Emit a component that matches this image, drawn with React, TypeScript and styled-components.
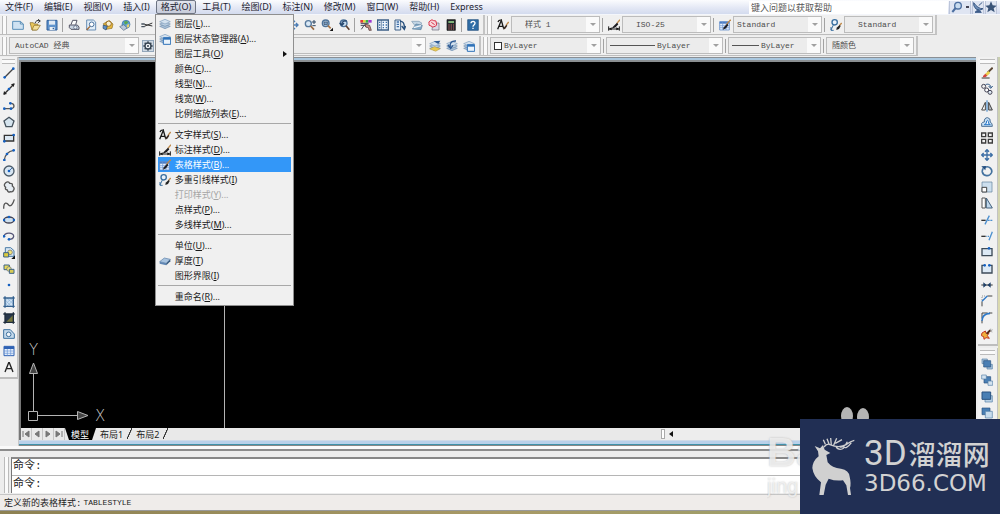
import React from "react";
import styled, { createGlobalStyle } from "styled-components";

const sans = `"Noto Sans", "Noto Sans CJK SC", sans-serif`;
const mono = `"Liberation Mono", "Noto Sans CJK SC", monospace`;

const GlobalStyle = createGlobalStyle`
  * { box-sizing: border-box; }
  body { margin: 0; background: #ededed; font-family: ${sans}; font-size: 9px; color: #222; overflow: hidden; }
  button, input, select { font: inherit; color: inherit; margin: 0; padding: 0; border: 0; background: none; }
`;

/* ---------- icons, drawn on a 36 unit grid ---------- */

const B = "#3f6fa8";
const D = "#2b4560";
const L = "#cfe2f2";

const brush = (
  <>
    <path d="M35 2 L22 17" stroke="#c08a4a" strokeWidth="4" />
    <path d="M25 14 L14 25 L12 32 L21 28 L28 18Z" fill="#1d1d22" stroke="none" />
  </>
);
const layerStack = (
  <>
    <path d="M2 25 L18 19 L34 25 L18 32Z" fill="#a8bfd6" stroke="#6f8fb0" strokeWidth="2" />
    <path d="M2 18 L18 12 L34 18 L18 25Z" fill="#bdd0e2" stroke="#6f8fb0" strokeWidth="2" />
    <path d="M2 11 L18 4 L34 11 L18 18Z" fill="#d4e2ef" stroke="#7f9dbd" strokeWidth="2" />
  </>
);
const dot = (x: number, y: number, r = 4) => (
  <circle key={`${x}-${y}`} cx={x} cy={y} r={r} fill="#1560c0" stroke="none" />
);

const icons: Record<string, React.ReactNode> = {
  new: <path d="M2 7 H25 L34 15 V31 H2Z M25 7 V15 H34" fill={L} stroke="#5a8fb8" strokeWidth="3" />,
  open: (
    <>
      <path d="M3 11 H13 L16 15 H27 L23 33 H9Z" fill="#e8c65a" stroke="#8a6a20" strokeWidth="2" />
      <path d="M9 33 L15 19 H34 L25 33Z" fill="#f4e09a" stroke="#8a6a20" strokeWidth="2" />
      <path d="M18 13 C20 5 26 3 32 5 M27 1 L34 6 L27 11" stroke="#333" strokeWidth="3" />
    </>
  ),
  save: (
    <>
      <path d="M3 4 H33 V33 H3Z" fill="#5f93cc" stroke="#2f5f9a" strokeWidth="3" />
      <path d="M9 5 H27 V17 H9Z" fill="#dfe9f4" stroke="none" />
      <path d="M11 24 H26 V33 H11Z" fill="#e8eef4" stroke="none" />
      <path d="M20 26 H24 V31 H20Z" fill="#2f5f9a" stroke="none" />
    </>
  ),
  print: (
    <>
      <path d="M9 17 L14 4 H27 L23 17" fill="#fff" stroke="#556" strokeWidth="3" />
      <path d="M4 18 H28 L33 24 V31 H9 L4 26Z" fill="#c9d3e0" stroke="#556" strokeWidth="3" />
      <circle cx="22" cy="25" r="5" fill="#e8edf4" stroke="#4a5a78" strokeWidth="2" />
    </>
  ),
  preview: (
    <>
      <path d="M5 3 H25 L32 9 V33 H5Z" fill="#e2eef8" stroke="#6a8fb5" strokeWidth="3" />
      <circle cx="20" cy="16" r="7" fill="#fff" stroke="#47709c" strokeWidth="3" />
      <path d="M15 22 L5 33" stroke="#a06a3a" strokeWidth="4" />
    </>
  ),
  publish: (
    <>
      <path d="M4 14 L22 5 L33 15 L30 28 L12 31Z" fill="#e9b93a" stroke="#8c6b1f" strokeWidth="2" />
      <circle cx="20" cy="14" r="8" fill="#f8f0d0" stroke="#9a6d20" strokeWidth="3" />
      <path d="M4 18 L16 22 L12 33 L3 28Z" fill="#5d8fc7" stroke={D} strokeWidth="2" />
    </>
  ),
  globe: (
    <>
      <circle cx="21" cy="16" r="12" fill="#5aa0d8" stroke="#3b6fa0" strokeWidth="2" />
      <path d="M15 8 Q22 3 28 10 Q24 17 17 16Z" fill="#59a650" stroke="none" />
      <path d="M23 18 L31 14 L30 24 L24 27Z" fill="#e8d26a" stroke="none" />
      <path d="M2 23 L14 17 L25 27 L14 34Z" fill="#b8c8da" stroke="#51677f" strokeWidth="2" />
    </>
  ),
  cut: (
    <>
      <path d="M10 16 L34 21 M10 22 L34 12" stroke="#333" strokeWidth="3" />
      <path d="M1 15 H11 M1 23 H11" stroke="#47525e" strokeWidth="4" />
    </>
  ),
  copy: <path d="M5 4 H22 V25 H5Z M14 11 H31 V32 H14Z" fill={L} stroke={B} strokeWidth="2" />,
  undo: <path d="M8 6 V18 H20 M8 18 C14 6 32 8 30 28" stroke={B} strokeWidth="4" />,
  pan: <path d="M18 3 V33 M3 18 H33 M12 9 L18 3 L24 9 M12 27 L18 33 L24 27 M27 12 L33 18 L27 24" stroke="#4a7cb5" strokeWidth="4" />,
  zoomRt: (
    <>
      <circle cx="13" cy="14" r="9" fill="#d9e8f5" stroke="#55789c" strokeWidth="4" />
      <path d="M20 21 L30 32" stroke="#9a6a40" strokeWidth="5" />
      <path d="M24 9 H36 M30 3 V15 M25 20 H35" stroke={D} strokeWidth="3" />
    </>
  ),
  zoomWin: (
    <>
      <circle cx="14" cy="13" r="10" fill="#b9d3ea" stroke="#4d7299" strokeWidth="4" />
      <path d="M9 9 H19 V17 H9Z" fill="#7ba3cc" stroke="#345" strokeWidth="2" />
      <path d="M21 20 L29 28" stroke="#a87444" strokeWidth="5" />
      <path d="M36 26 V36 H26Z" fill="#111" stroke="none" />
    </>
  ),
  zoomPrev: (
    <>
      <circle cx="17" cy="13" r="10" fill="#c6dbee" stroke="#4d7299" strokeWidth="4" />
      <path d="M24 20 L34 32" stroke="#5d4030" strokeWidth="5" />
      <path d="M26 6 C18 4 10 8 12 17 M5 12 L12 19 L18 12" stroke="#26476e" strokeWidth="4" />
    </>
  ),
  props: (
    <>
      <path d="M1 3 H9 V11 H1Z" fill="#e03a3a" stroke="none" />
      <path d="M9 3 H17 V11 H9Z" fill="#e8d53a" stroke="none" />
      <path d="M17 3 H25 V11 H17Z" fill="#38b04a" stroke="none" />
      <path d="M25 3 H35 V11 H25Z" fill="#a03ad0" stroke="none" />
      <path d="M2 13 H26 M2 19 H18 M4 31 L13 18 L20 24" stroke="#445" strokeWidth="3" />
      <path d="M15 15 L29 19 L34 34 L27 34 L25 26 L17 24Z" fill="#c88f84" stroke="#4a3030" strokeWidth="2" />
    </>
  ),
  designCenter: (
    <>
      <path d="M2 3 H34 V33 H2Z" fill="#eef4fa" stroke="#3d5f86" strokeWidth="4" />
      <path d="M13 3 V33" stroke="#3d5f86" strokeWidth="2" />
      <path d="M6 10 H10 M6 18 H10 M6 26 H10 M17 10 H21 M26 10 H30 M17 18 H21 M26 18 H30 M17 26 H21 M26 26 H30" stroke={B} strokeWidth="4" />
    </>
  ),
  palettes: (
    <>
      <path d="M3 3 H20 V33 H3Z" fill="#e4eef8" stroke="#3d5f86" strokeWidth="3" />
      <path d="M8 9 H15 M8 16 H15 M8 23 H15" stroke={B} strokeWidth="4" />
      <path d="M18 7 C28 6 31 14 31 26 M23 21 L31 31 L35 21" stroke="#28507c" strokeWidth="4" />
    </>
  ),
  sheets: (
    <>
      <path d="M2 7 H24 L33 13 L26 20 H12Z" fill="#c2d5e4" stroke="#7d99b0" strokeWidth="2" />
      <path d="M4 30 L15 15 L34 19 L30 32Z" fill="#7fa6c4" stroke="#5d7f9b" strokeWidth="2" />
      <path d="M8 26 L30 20" stroke="#f2f6fa" strokeWidth="4" />
    </>
  ),
  markup: (
    <>
      <path d="M14 12 H33 V33 H12Z" fill="#d9d9e4" stroke="#667" strokeWidth="2" />
      <path d="M6 6 Q12 -1 17 5 Q26 3 25 12 Q29 20 21 22 Q14 27 9 21 Q0 20 3 13 Q1 8 6 6Z" fill="#f8d8dc" stroke="#d8344a" strokeWidth="3" />
      <path d="M10 10 L20 17" stroke="#d8344a" strokeWidth="3" />
    </>
  ),
  calc: (
    <>
      <path d="M6 2 H31 V34 H6Z" fill="#252a2e" stroke="#111" strokeWidth="2" />
      <path d="M10 6 H27 V12 H10Z" fill="#82b27a" stroke="none" />
      <path d="M10 18 H27 M10 24 H27 M10 30 H27" stroke="#c26060" strokeWidth="3" strokeDasharray="4 3" />
    </>
  ),
  help: (
    <>
      <path d="M2 2 H34 V34 H2Z" fill="#2f6da6" stroke="#1d4a78" strokeWidth="2" />
      <path d="M12 13 C12 5 25 6 24 13 C24 18 18 18 18 23 M18 26 V30" stroke="#fff" strokeWidth="4" />
    </>
  ),
  textStyle: (
    <>
      <path d="M2 31 L13 4 L20 29 M5 22 H19 M3 9 Q6 2 13 4" stroke="#1b1b1b" strokeWidth="4" />
      <path d="M35 9 L27 19" stroke="#c08a4a" strokeWidth="4" />
      <path d="M28 17 L20 26 L19 32 L25 29 L31 20Z" fill="#3a2a22" stroke="none" />
    </>
  ),
  dimStyle: (
    <>
      <path d="M2 30 H34 M2 22 V35 M34 22 V35" stroke="#1b1b1b" strokeWidth="3" />
      <path d="M2 30 L11 25 V34Z M34 30 L25 25 V34Z" fill="#111" stroke="none" />
      <path d="M36 2 L26 14" stroke="#c08a4a" strokeWidth="4" />
      <path d="M27 11 L14 24 L11 29 L23 25 L31 16Z" fill="#1d1d22" stroke="none" />
    </>
  ),
  tableStyle: (
    <>
      <path d="M2 8 H31 V33 H2Z" fill="#e8f0fb" stroke="#4a7cc4" strokeWidth="2" />
      <path d="M2 8 H31 V14 H2Z" fill="#4a7cc4" stroke="none" />
      <path d="M2 20 H31 M2 26 H31 M11 8 V33 M21 8 V33" stroke="#6d96d0" strokeWidth="2" />
      {brush}
    </>
  ),
  leaderStyle: (
    <>
      <circle cx="14" cy="10" r="8" fill="#eaf2fa" stroke="#3a6f9f" strokeWidth="4" />
      <path d="M10 18 L3 33 M3 24 V34 H11" stroke="#3a6f9f" strokeWidth="3" />
      <path d="M35 12 L28 20" stroke="#c08a4a" strokeWidth="4" />
      <path d="M29 18 L20 26 L19 33 L27 30 L32 21Z" fill="#222" stroke="none" />
    </>
  ),
  gear: (
    <>
      <path d="M1 1 H35 V35 H1Z" fill="#d0dae4" stroke="#5b7896" strokeWidth="2" />
      <circle cx="18" cy="18" r="9" fill="#f2f5f8" stroke="#33414f" strokeWidth="4" />
      <circle cx="18" cy="18" r="3" fill="#33414f" stroke="none" />
      <path d="M18 4 V9 M18 27 V32 M4 18 H9 M27 18 H32 M8 8 L11 11 M28 8 L25 11 M8 28 L11 25 M28 28 L25 25" stroke="#33414f" strokeWidth="4" />
    </>
  ),
  layers: layerStack,
  layerCurrent: (
    <>
      {layerStack}
      <path d="M2 27 L16 20 L34 26 L20 34Z" fill="#e9c84f" stroke="#a88a2c" />
      <path d="M14 4 L34 2 L28 12Z" fill="#2d5a94" stroke="none" />
    </>
  ),
  layerPrev: (
    <>
      {layerStack}
      <path d="M30 3 C16 2 10 10 13 21 M6 15 L14 25 L21 16" stroke="#2d5a94" strokeWidth="4" />
    </>
  ),
  layerState: (
    <>
      {layerStack}
      <path d="M13 14 H35 V34 H13Z" fill="#eaf3fb" stroke="#2f72b8" strokeWidth="3" />
      <path d="M13 14 H35 V20 H13Z" fill="#2f72b8" stroke="none" />
    </>
  ),
  thickness: (
    <>
      <path d="M2 20 L16 9 L34 13 L22 25Z" fill="#a9c4e0" stroke="#5b7fa6" strokeWidth="2" />
      <path d="M2 20 L22 25 V31 L2 26Z" fill="#5f86b4" stroke="none" />
      <path d="M22 25 L34 13 V19 L22 31Z" fill="#35597f" stroke="none" />
    </>
  ),

  line: <><path d="M4 32 L32 4" stroke="#444" strokeWidth="4" />{dot(5, 31)}{dot(31, 5)}</>,
  xline: <><path d="M3 34 L33 3" stroke="#333" strokeWidth="4" /><path d="M1 35 L3 24 L12 33Z M35 1 L24 4 L32 12Z" fill="#222" stroke="none" />{dot(18, 18)}</>,
  pline: <><path d="M3 26 H25 C36 25 36 9 22 10" stroke="#555" strokeWidth="4" />{dot(4, 26)}{dot(22, 10)}{dot(24, 26)}</>,
  polygon: <path d="M18 4 L33 15 L27 32 H9 L3 15Z" fill="#d5e4ee" stroke="#46535e" strokeWidth="4" />,
  rect: <><path d="M4 10 H32 V27 H4Z" fill="#dbe8f3" stroke="#333" strokeWidth="4" />{dot(4, 28)}{dot(32, 9)}</>,
  arc: <><path d="M4 33 C6 17 16 7 32 4" stroke="#555" strokeWidth="4" />{dot(4, 33)}{dot(12, 15)}{dot(32, 4)}</>,
  circle: <><circle cx="18" cy="18" r="15" fill="#d8e6f2" stroke="#4a5a68" strokeWidth="4" /><path d="M18 18 L28 8" stroke={B} strokeWidth="3" />{dot(18, 18)}</>,
  cloud: <path d="M8 5 Q16 -1 20 7 Q30 6 28 15 Q36 20 32 27 Q30 34 22 32 Q15 36 13 27 Q5 26 8 19 Q0 12 8 5Z" fill="#e6edf3" stroke="#555" strokeWidth="4" />,
  spline: <path d="M2 32 C2 10 12 14 17 21 C24 28 30 17 34 4" stroke="#555" strokeWidth="4" />,
  ellipse: <><ellipse cx="18" cy="18" rx="15" ry="9" fill="#cfe0ee" stroke="#445" strokeWidth="4" />{dot(3, 18)}{dot(33, 18)}{dot(18, 9)}</>,
  ellipseArc: <><path d="M3 19 C5 5 33 7 32 19 C31 26 24 28 18 28" stroke="#557" strokeWidth="4" />{dot(3, 19)}{dot(18, 28)}</>,
  insert: (
    <>
      <path d="M7 2 H23 L33 11 V28 H7Z" fill="#d5e5f2" stroke="#4b7ba6" strokeWidth="3" />
      <circle cx="21" cy="16" r="7" fill="#efe27a" stroke="#666" strokeWidth="2" />
      <path d="M2 17 H17 V30 H2Z" fill="#dccb3c" stroke="#3c6288" strokeWidth="3" />
      <path d="M36 25 V36 H25Z" fill="#111" stroke="none" />
    </>
  ),
  block: (
    <>
      <path d="M3 6 H19 V20 H3Z" fill="#e8d95a" stroke="#3c6288" strokeWidth="3" />
      <circle cx="18" cy="18" r="7" fill="#efe27a" stroke="#5a6a70" strokeWidth="2" />
      <path d="M19 19 H33 V31 H19Z" fill="#d7cb55" stroke="#3c6288" strokeWidth="3" />
    </>
  ),
  point: dot(18, 18),
  hatch: (
    <>
      <path d="M6 6 H31 V31 H6Z" fill="#cfe2f3" stroke="none" />
      <path d="M7 13 L23 29 M7 22 L15 30 M13 7 L30 23 M22 7 L30 15 M7 15 L15 7 M7 25 L25 7 M13 30 L30 13" stroke="#8db4da" strokeWidth="2" />
      <path d="M6 1 V35 M31 1 V35 M1 6 H35 M1 31 H35" stroke="#35618e" strokeWidth="4" />
    </>
  ),
  gradient: (
    <>
      <path d="M6 6 H31 V31 H6Z" fill="#27364a" stroke="none" />
      <path d="M31 8 V31 H9Z" fill="#77783e" stroke="none" />
      <path d="M6 1 V35 M31 1 V35 M1 6 H35 M1 31 H35" stroke="#1e2c3c" strokeWidth="4" />
    </>
  ),
  region: <><path d="M2 5 H22 L34 18 V31 H2Z" fill="#c5daec" stroke="#3d719f" strokeWidth="3" /><circle cx="17" cy="19" r="7" fill="#eef4f9" stroke="#3d719f" strokeWidth="3" /></>,
  table: (
    <>
      <path d="M3 4 H33 V32 H3Z" fill="#e4eefb" stroke="#2f62b4" strokeWidth="3" />
      <path d="M3 4 H33 V12 H3Z" fill="#2f62b4" stroke="none" />
      <path d="M3 18 H33 M3 25 H33 M13 12 V32 M23 12 V32" stroke="#6c97d8" strokeWidth="2" />
    </>
  ),
  mtext: <path d="M6 33 L17 5 H19 L30 33 M10 23 H26" stroke="#222" strokeWidth="4" />,

  erase: (
    <>
      <path d="M2 33 H26" stroke="#333" strokeWidth="3" />
      <path d="M35 2 L20 17" stroke="#5a4632" strokeWidth="6" />
      <path d="M22 12 L28 18 L18 27 L12 21Z" fill="#e9cf4a" stroke="none" />
      <path d="M13 20 L19 26 L13 31 H6 V27Z" fill="#d2453c" stroke="none" />
    </>
  ),
  copyObj: (
    <>
      <circle cx="8" cy="10" r="6" stroke="#445" strokeWidth="3" />
      <circle cx="17" cy="21" r="6" fill="#fff" stroke="#445" strokeWidth="3" />
      <circle cx="27" cy="28" r="6" fill="#dde8f2" stroke="#445" strokeWidth="3" />
      <path d="M14 5 C22 1 30 6 29 13 M23 9 L29 16 L35 9" stroke="#244f80" strokeWidth="3" />
    </>
  ),
  mirror: <><path d="M13 7 V30 H2Z" fill="#fff" stroke="#444" strokeWidth="3" /><path d="M23 7 V30 H34Z" fill="#b9bec4" stroke="#444" strokeWidth="3" /><path d="M18 1 V35" stroke="#2c78c0" strokeWidth="3" /></>,
  offset: <><path d="M2 31 V22 Q4 18 10 18 Q9 5 20 5 Q29 6 28 19 Q34 20 34 31Z" fill="#c7dff4" stroke="#4a6f94" strokeWidth="3" /><path d="M10 26 Q18 24 17 15 Q20 10 22 16 Q22 26 28 26Z" fill="#f4f8fc" stroke="#2878c8" strokeWidth="3" /></>,
  array: <path d="M2 3 H14 V14 H2Z M22 3 H34 V14 H22Z M2 22 H14 V33 H2Z M22 22 H34 V33 H22Z" fill="#f2f2f2" stroke="#3c3c3c" strokeWidth="4" />,
  move: <path d="M18 3 V33 M3 18 H33 M12 8 L18 2 L24 8 M12 28 L18 34 L24 28 M8 12 L2 18 L8 24 M28 12 L34 18 L28 24" stroke="#3c6ea5" strokeWidth="4" />,
  rotate: <><path d="M11 7 C25 1 36 13 31 24 C25 36 7 34 4 21 Q3 15 7 10" stroke="#44729f" strokeWidth="5" /><path d="M1 4 L15 3 L13 16Z" fill="#244f80" stroke="none" /></>,
  scale: <><path d="M3 3 H33 V33 H3Z" fill="#cddfee" stroke="#5d7f9c" strokeWidth="2" /><path d="M3 19 H17 V33 H3Z" fill="#fff" stroke="#444" strokeWidth="3" /></>,
  stretch: <><path d="M3 3 H13 V33 H3Z" fill="#fff" stroke="#555" strokeWidth="3" /><path d="M16 3 L34 33 H16Z" fill="#bfd6ea" stroke="#44637f" strokeWidth="3" /></>,
  trim: <><path d="M1 19 H14" stroke="#333" strokeWidth="4" /><path d="M20 19 H35" stroke="#4c90d0" strokeWidth="4" strokeDasharray="6 2" /><path d="M12 31 L25 5" stroke="#4c90d0" strokeWidth="4" /></>,
  extend: <><path d="M1 19 H14" stroke="#333" strokeWidth="4" /><path d="M16 19 H25" stroke="#4c90d0" strokeWidth="4" strokeDasharray="3 2" /><path d="M24 31 L34 5" stroke="#4c90d0" strokeWidth="4" /></>,
  breakPt: <><path d="M3 8 H33 V29 H3Z" fill="#dce9f5" stroke="#3c4a58" strokeWidth="4" />{dot(24, 7)}</>,
  break: <><path d="M10 7 H3 V30 H33 V7 H26" fill="#dce9f5" stroke="#3c4a58" strokeWidth="4" />{dot(11, 7)}{dot(25, 7)}</>,
  join: <><path d="M1 18 H35" stroke="#333" strokeWidth="3" /><path d="M7 10 L17 18 L7 26Z M29 10 L19 18 L29 26Z" fill="#1f4068" stroke="none" /></>,
  chamfer: <><path d="M3 34 V19 M19 3 H34" stroke="#444" strokeWidth="3" /><path d="M3 19 L19 3" stroke="#2c78c8" strokeWidth="4" /><path d="M3 15 V3 H15" stroke="#666" strokeWidth="2" strokeDasharray="3 3" /></>,
  fillet: <><path d="M3 34 V24 M24 3 H34 M3 20 V3 H20" stroke="#444" strokeWidth="3" /><path d="M3 26 Q4 5 27 4" stroke="#2c78c8" strokeWidth="5" /></>,
  explode: (
    <>
      <path d="M3 15 L13 9 L15 16 L24 15 L19 23 L25 31 L15 29 L9 34 L8 26 L1 23Z" fill="#efb13c" stroke="#c23a26" strokeWidth="3" />
      <path d="M17 17 L28 7" stroke="#502c1c" strokeWidth="6" />
      <path d="M29 2 V9 M35 5 L30 8 M34 12 L29 10" stroke="#888" strokeWidth="2" />
    </>
  ),
  front: <><path d="M3 3 H19 V17 H3Z M18 19 H34 V33 H18Z" fill="#a9c3dc" stroke="#5580a8" strokeWidth="2" /><path d="M8 8 H29 V27 H8Z" fill="#4a7fb4" stroke="#2b5380" strokeWidth="2" /></>,
  back: <><path d="M9 8 H29 V27 H9Z" fill="#4a7fb4" stroke="#2b5380" strokeWidth="2" /><path d="M2 3 H16 V15 H2Z M21 21 H35 V34 H21Z" fill="#d3e2ef" stroke="#5580a8" strokeWidth="2" /></>,
  above: <><path d="M12 14 H34 V33 H12Z" fill="#bcd3e6" stroke="#5580a8" strokeWidth="2" /><path d="M3 3 H29 V25 H3Z" fill="#4a7fb4" stroke="#2b5380" strokeWidth="3" /></>,
  under: <><path d="M3 3 H27 V23 H3Z" fill="#4a7fb4" stroke="#2b5380" strokeWidth="2" /><path d="M13 13 H34 V33 H13Z" fill="#c8dced" stroke="#5580a8" strokeWidth="2" /></>,

  search: <><circle cx="21" cy="14" r="10" fill="#c9dcef" stroke="#4c6fa0" strokeWidth="4" /><path d="M14 21 L4 33" stroke="#4c6fa0" strokeWidth="6" /></>,
  comm: <><path d="M5 5 Q18 24 33 23 Q24 32 12 24 Q3 15 5 5Z" fill="#6f8fb8" stroke="#3c5b88" strokeWidth="3" /><path d="M20 14 L31 4 M18 26 L9 34 H28Z" fill="#3c5b88" stroke="#3c5b88" strokeWidth="3" /></>,
  star: <path d="M18 1 L23 13 L35 14 L26 22 L29 34 L18 27 L7 34 L10 22 L1 14 L13 13Z" fill="#3a5478" stroke="none" />,
};

const Glyph = styled.svg`
  width: 12px;
  height: 12px;
  flex: none;
  display: block;
`;
const Icon = ({ name }: { name: string }) => (
  <Glyph viewBox="0 0 36 36" fill="none" aria-hidden="true">{icons[name]}</Glyph>
);

/* ---------- shell ---------- */

const Shell = styled.div`
  position: relative;
  display: flex;
  flex-direction: column;
  min-height: 100vh;
  overflow: hidden;
  background: #ededed;
`;

const MenuBar = styled.nav`
  display: flex;
  align-items: stretch;
  gap: 1px;
  height: 15px;
  padding-right: 3px;
  background: linear-gradient(#fbfcfe, #e4e8f5 55%, #d3dbee);
  border-bottom: 1px solid #f4f6fb;
`;
const MenuSlot = styled.div`
  position: relative;
  display: flex;
`;
const MenuButton = styled.button<{ $open?: boolean }>`
  padding: 0 4px;
  line-height: 12px;
  white-space: nowrap;
  color: #1c2230;
  border: 1px solid ${(p) => (p.$open ? "#6d7483" : "transparent")};
  border-radius: 2px;
  background: ${(p) => (p.$open ? "linear-gradient(#e2e5ee, #c7ccda)" : "none")};
`;
const HelpSearch = styled.div`
  display: flex;
  align-items: center;
  gap: 1px;
  margin-left: auto;
`;
const HelpInput = styled.input`
  width: 199px;
  height: 13px;
  padding: 0 2px;
  background: #fff;
  &::placeholder { color: #555; opacity: 1; }
`;
const HelpButton = styled.button<{ $wide?: boolean }>`
  display: flex;
  align-items: center;
  justify-content: center;
  gap: 3px;
  width: ${(p) => (p.$wide ? 22 : 12)}px;
  height: 13px;
  background: #dfe5f2;
  border: 1px solid #bcc5da;
  border-width: 0 1px;
`;
const Caret = styled.span`
  width: 3px;
  height: 2px;
  background: #445;
`;

/* ---------- drop-down menu ---------- */

const Menu = styled.div`
  position: absolute;
  top: 14px;
  left: -1px;
  z-index: 5;
  width: 139px;
  padding: 1px 2px;
  background: #f0f0f0;
  border: 1px solid #8f8f8f;
`;
const MenuItem = styled.button<{ $active?: boolean }>`
  display: flex;
  align-items: center;
  gap: 4px;
  width: 100%;
  height: 15px;
  padding: 0 4px 0 1px;
  line-height: 15px;
  text-align: left;
  white-space: nowrap;
  color: ${(p) => (p.$active ? "#fff" : "#1a1a1a")};
  background: ${(p) => (p.$active ? "#3397f8" : "none")};
  &:disabled { color: #a5a5a5; }
`;
const IconSlot = styled.span`
  width: 12px;
  flex: none;
`;
const MenuRule = styled.hr`
  height: 1px;
  margin: 2px 0 3px;
  border: 0;
  background: #a8a8a8;
`;
const SubArrow = styled.span`
  margin-left: auto;
  border: 3px solid transparent;
  border-left: 4px solid #111;
  border-right: 0;
`;

type Entry = { label: string; hot: string; tail?: string; icon?: string; sub?: boolean; off?: boolean; active?: boolean };
const menuGroups: Entry[][] = [
  [
    { label: "图层", hot: "L", tail: "...", icon: "layers" },
    { label: "图层状态管理器", hot: "A", tail: "...", icon: "layerState" },
    { label: "图层工具", hot: "O", sub: true },
    { label: "颜色", hot: "C", tail: "..." },
    { label: "线型", hot: "N", tail: "..." },
    { label: "线宽", hot: "W", tail: "..." },
    { label: "比例缩放列表", hot: "E", tail: "..." },
  ],
  [
    { label: "文字样式", hot: "S", tail: "...", icon: "textStyle" },
    { label: "标注样式", hot: "D", tail: "...", icon: "dimStyle" },
    { label: "表格样式", hot: "B", tail: "...", icon: "tableStyle", active: true },
    { label: "多重引线样式", hot: "I", icon: "leaderStyle" },
    { label: "打印样式", hot: "Y", tail: "...", off: true },
    { label: "点样式", hot: "P", tail: "..." },
    { label: "多线样式", hot: "M", tail: "..." },
  ],
  [
    { label: "单位", hot: "U", tail: "..." },
    { label: "厚度", hot: "T", icon: "thickness" },
    { label: "图形界限", hot: "I" },
  ],
  [{ label: "重命名", hot: "R", tail: "..." }],
];

const FormatMenu = () => (
  <Menu role="menu">
    {menuGroups.map((group, g) => (
      <React.Fragment key={g}>
        {g > 0 && <MenuRule />}
        {group.map((e) => (
          <MenuItem key={e.label} role="menuitem" $active={e.active} disabled={e.off}>
            <IconSlot>{e.icon && <Icon name={e.icon} />}</IconSlot>
            <span>{e.label}(<u>{e.hot}</u>){e.tail}</span>
            {e.sub && <SubArrow />}
          </MenuItem>
        ))}
      </React.Fragment>
    ))}
  </Menu>
);

/* ---------- toolbars ---------- */

const ToolRow = styled.div`
  display: flex;
  height: 21px;
`;
const ToolBar = styled.div`
  display: flex;
  align-items: center;
  height: 20px;
  padding: 0 2px;
  background: #f0f0f0;
  border-right: 2px solid #c4c4c4;
  border-bottom: 1px solid #bdbdbd;
`;
const Grip = styled.span`
  width: 5px;
  height: 18px;
  margin-right: 2px;
  border: 1px solid #bbb;
  border-width: 0 1px;
  background: #fafafa;
`;
const ToolButton = styled.button`
  display: flex;
  align-items: center;
  justify-content: center;
  flex: none;
  width: 17px;
  height: 16px;
`;
const Divider = styled.span`
  width: 1px;
  height: 14px;
  margin: 0 2px;
  background: #a2a2a2;
`;
const ComboBox = styled.div<{ $width: number; $indent?: number }>`
  display: flex;
  align-items: center;
  gap: 2px;
  width: ${(p) => p.$width}px;
  height: 17px;
  padding-left: ${(p) => p.$indent ?? 3}px;
  font-family: ${mono};
  font-size: 8px;
  color: #4c4c4c;
  background: #ececec;
  border: 1px solid #bcbcbc;
`;
const ComboSelect = styled.select`
  flex: 1;
  min-width: 0;
  height: 15px;
  appearance: none;
`;
const ComboArrow = styled.span`
  display: flex;
  align-items: center;
  justify-content: center;
  width: 13px;
  height: 15px;
  background: #fafafa;
  &::after {
    content: "";
    border: 3px solid transparent;
    border-top: 3px solid #a0a0a0;
    border-bottom: 0;
  }
`;
const Swatch = styled.span`
  width: 8px;
  height: 8px;
  background: #fff;
  border: 1px solid #333;
`;
const LineSample = styled.span<{ $length: number }>`
  width: ${(p) => p.$length}px;
  height: 1px;
  background: #555;
`;

type ComboProps = { label: string; value: string; width: number; indent?: number; lead?: React.ReactNode };
const Combo = ({ label, value, width, indent, lead }: ComboProps) => (
  <ComboBox $width={width} $indent={indent}>
    {lead}
    <ComboSelect aria-label={label}><option>{value}</option></ComboSelect>
    <ComboArrow />
  </ComboBox>
);

const Tools = ({ names }: { names: string[] }) => (
  <>
    {names.map((n, i) =>
      n === "|" ? <Divider key={i} /> : <ToolButton key={i} aria-label={n}><Icon name={n} /></ToolButton>
    )}
  </>
);

const standardTools = [
  "new", "open", "save", "|", "print", "preview", "publish", "globe", "|", "cut", "copy", "copy", "layers", "|",
  "undo", "undo", "|", "pan", "pan", "pan", "zoomRt", "zoomWin", "zoomPrev", "|",
  "props", "designCenter", "palettes", "sheets", "markup", "calc", "|", "help",
];
const drawTools = [
  "line", "xline", "pline", "polygon", "rect", "arc", "circle", "cloud", "spline", "ellipse", "ellipseArc",
  "insert", "block", "point", "hatch", "gradient", "region", "table", "mtext",
];
const modifyTools = [
  "erase", "copyObj", "mirror", "offset", "array", "move", "rotate", "scale", "stretch", "trim", "extend",
  "breakPt", "break", "join", "chamfer", "fillet", "explode",
];
const orderTools = ["front", "back", "above", "under"];

/* ---------- workspace ---------- */

const Workspace = styled.main`
  display: flex;
  flex: 1;
  min-height: 0;
`;
const SideBar = styled.aside<{ $width: number; $inset?: number }>`
  display: flex;
  flex-direction: column;
  gap: 2px;
  flex: none;
  width: ${(p) => p.$width}px;
  padding-left: ${(p) => p.$inset ?? 0}px;
  background: #ededed;
`;
const SideTools = styled.div<{ $height: number }>`
  display: grid;
  grid-auto-rows: 1fr;
  justify-items: center;
  align-items: center;
  height: ${(p) => p.$height}px;
`;
const SideGroup = styled.div`
  padding: 1px 1px 2px 0;
  background: #f1f1f1;
  border-right: 1px solid #c2c2c2;
  border-bottom: 2px solid #bdbdbd;
`;
const SideGrip = styled.div`
  height: 5px;
  margin: 1px 1px 1px 2px;
  border: 1px solid #bbb;
  border-width: 1px 0;
  background: #fafafa;
`;
const Frame = styled.section`
  display: flex;
  flex-direction: column;
  flex: 1;
  min-width: 0;
  border-left: 1px solid #c8c8c8;
  border-top: 1px solid #8a8f94;
`;
const FrameTop = styled.div`
  height: 4px;
  background: linear-gradient(#a9c7df 50%, #8b8f92 50%);
`;
const Canvas = styled.div`
  position: relative;
  flex: 1;
  background: #000;
  border-left: 2px solid #777;
`;
const Drawing = styled.svg`
  position: absolute;
  left: 0;
  bottom: 0;
  width: 240px;
  height: 130px;
`;
const SheetBar = styled.div`
  display: flex;
  height: 12px;
  background: #e9e9e9;
  border-left: 2px solid #777;
`;
const SheetNav = styled.button`
  width: 11px;
  height: 12px;
  border-right: 1px solid #c5c5c5;
  display: flex;
  align-items: center;
  justify-content: center;
`;
const SheetTab = styled.button<{ $active?: boolean }>`
  padding: ${(p) => (p.$active ? "0 7px 0 6px" : "0 4px")};
  line-height: 11px;
  white-space: nowrap;
  color: ${(p) => (p.$active ? "#fff" : "#222")};
  background: ${(p) => (p.$active ? "#000" : "none")};
  clip-path: ${(p) => (p.$active ? "polygon(0 0, 100% 0, calc(100% - 4px) 100%, 4px 100%)" : "none")};
`;
const Slash = styled.span`
  width: 5px;
  height: 11px;
  background: linear-gradient(to bottom right, transparent 42%, #333 46%, #333 54%, transparent 58%);
`;
const ScrollTrack = styled.div`
  display: flex;
  align-items: center;
  gap: 4px;
  width: 33%;
  margin-left: auto;
  background: #ededed;
`;
const SplitGrip = styled.span`
  width: 4px;
  height: 10px;
  background: #fff;
  border: 1px solid #aaa;
`;
const ScrollArrow = styled.button`
  border: 3px solid transparent;
  border-right: 4px solid #111;
  border-left: 0;
`;
const FrameBottom = styled.div`
  height: 6px;
  background: linear-gradient(#b9d1ea 75%, #3f93ab 75%);
  border-top: 1px solid #cfdbe8;
  border-bottom: 1px solid #888;
`;
const EdgeStrip = styled.div`
  width: 2px;
  background: linear-gradient(#c9cfb0, #e4dfae);
`;

/* ---------- command line and status ---------- */

const CommandPane = styled.section`
  display: flex;
  padding: 6px 0 1px 4px;
  margin-top: 3px;
  background: #ededed;
  border-top: 2px solid #8c8c8c;
  border-bottom: 1px solid #c6c6c6;
  box-shadow: 0 -3px 0 #fafafa;
`;
const CommandGrip = styled.span`
  width: 5px;
  margin-right: 2px;
  border: 1px solid #bbb;
  border-width: 0 1px;
  background: #fafafa;
`;
const CommandLines = styled.div`
  flex: 1;
  font-family: ${mono};
  font-size: 11px;
  line-height: 17px;
  background: #fff;
  border-top: 2px solid #888;
  border-left: 1px solid #777;
`;
const CommandHistory = styled.div`
  height: 17px;
  padding-left: 1px;
  line-height: 14px;
  border-bottom: 1px solid #b5b5b5;
`;
const CommandEntry = styled.label`
  display: flex;
  align-items: center;
  height: 17px;
  padding-left: 1px;
`;
const CommandInput = styled.input`
  flex: 1;
  min-width: 0;
  height: 14px;
`;
const StatusBar = styled.footer`
  display: flex;
  align-items: center;
  gap: 2px;
  height: 16px;
  padding-left: 4px;
  font-family: ${mono};
  background: #efecea;
  border-bottom: 1px solid #999;
`;
const StatusCode = styled.span`
  font-size: 8px;
`;
const DeskStrip = styled.div`
  height: 3px;
  background: linear-gradient(to right, #8d8152, #a89a66 50%, #9aa06a 90%, #8d8152);
`;

/* ---------- overlays ---------- */

const Watermark = styled.div`
  position: absolute;
  right: 200px;
  bottom: 14px;
  z-index: 2;
  width: 33px;
  overflow: hidden;
  font-family: "Liberation Sans", sans-serif;
  white-space: nowrap;
  color: rgba(245, 245, 245, 0.8);
  text-shadow: 0 0 2px rgba(150, 150, 150, 0.6);
`;
const WatermarkTop = styled.div`
  font-size: 40px;
  line-height: 40px;
  font-weight: bold;
`;
const WatermarkSub = styled.div`
  font-size: 20px;
  line-height: 28px;
`;
const Ears = styled.svg`
  position: absolute;
  right: 128px;
  bottom: 92px;
  width: 32px;
  height: 15px;
`;
const Brand = styled.div`
  position: absolute;
  right: 0;
  bottom: 0;
  z-index: 3;
  display: flex;
  align-items: center;
  gap: 8px;
  width: 200px;
  height: 95px;
  padding-left: 12px;
  color: #d2d2d2;
  background: #212f54;
`;
const Deer = styled.svg`
  flex: none;
  width: 44px;
  height: 60px;
`;
const BrandName = styled.div`
  display: flex;
  align-items: center;
  gap: 2px;
  height: 34px;
  font-family: "Noto Sans CJK SC", sans-serif;
  font-size: 27px;
  font-weight: 500;
  line-height: 34px;
  white-space: nowrap;
`;
const BrandPrefix = styled.span`
  font-family: Roboto, sans-serif;
  font-size: 35px;
  font-weight: 400;
`;
const BrandUrl = styled.div`
  font-family: "DejaVu Sans", sans-serif;
  font-size: 23px;
  line-height: 25px;
`;

const menusBefore = ["文件(F)", "编辑(E)", "视图(V)", "插入(I)"];
const menusAfter = ["工具(T)", "绘图(D)", "标注(N)", "修改(M)", "窗口(W)", "帮助(H)", "Express"];
const navShapes = [
  ["第一个", "M1 1V7 M7 1L3 4L7 7Z"],
  ["上一个", "M6 1L2 4L6 7Z"],
  ["下一个", "M2 1L6 4L2 7Z"],
  ["最后一个", "M7 1V7 M1 1L5 4L1 7Z"],
];
const NavGlyph = styled.svg`
  width: 8px;
  height: 8px;
`;

export default function App() {
  return (
    <>
      <GlobalStyle />
      <Shell>
        <MenuBar>
          {menusBefore.map((m) => <MenuButton key={m}>{m}</MenuButton>)}
          <MenuSlot>
            <MenuButton $open aria-expanded="true">格式(O)</MenuButton>
            <FormatMenu />
          </MenuSlot>
          {menusAfter.map((m) => <MenuButton key={m}>{m}</MenuButton>)}
          <HelpSearch>
            <HelpInput aria-label="帮助" placeholder="键入问题以获取帮助" />
            <HelpButton $wide aria-label="搜索"><Icon name="search" /><Caret /></HelpButton>
            <HelpButton aria-label="通讯中心"><Icon name="comm" /></HelpButton>
            <HelpButton aria-label="收藏夹"><Icon name="star" /></HelpButton>
          </HelpSearch>
        </MenuBar>

        <ToolRow>
          <ToolBar>
            <Grip />
            <Tools names={standardTools} />
          </ToolBar>
          <ToolBar>
            <Grip />
            <Tools names={["textStyle"]} />
            <Combo label="文字样式" value="样式 1" width={89} indent={13} />
            <Divider />
            <Tools names={["dimStyle"]} />
            <Combo label="标注样式" value="ISO-25" width={89} indent={13} />
            <Divider />
            <Tools names={["tableStyle"]} />
            <Combo label="表格样式" value="Standard" width={89} />
            <Divider />
            <Tools names={["leaderStyle"]} />
            <Combo label="多重引线样式" value="Standard" width={89} indent={13} />
          </ToolBar>
        </ToolRow>
        <ToolRow>
          <ToolBar>
            <Grip />
            <Combo label="工作空间" value="AutoCAD 经典" width={130} indent={5} />
            <Tools names={["gear", "gear"]} />
            <Divider />
            <Tools names={["layerState"]} />
            <Combo label="图层" value="" width={231} />
            <Tools names={["layerCurrent", "layerPrev", "layerState"]} />
          </ToolBar>
          <ToolBar>
            <Grip />
            <Combo label="颜色" value="ByLayer" width={111} lead={<Swatch />} />
            <Divider />
            <Combo label="线型" value="ByLayer" width={117} lead={<LineSample $length={45} />} />
            <Divider />
            <Combo label="线宽" value="ByLayer" width={93} lead={<LineSample $length={27} />} />
            <Divider />
            <Combo label="打印样式" value="随颜色" width={88} indent={5} />
          </ToolBar>
        </ToolRow>

        <Workspace>
          <SideBar $width={18}>
            <SideGroup>
              <SideGrip />
              <SideTools $height={310}><Tools names={drawTools} /></SideTools>
            </SideGroup>
          </SideBar>
          <Frame>
            <FrameTop />
            <Canvas>
              <Drawing viewBox="0 0 240 130" fill="none" stroke="#b4b4b4">
                <path d="M203.500 0 V130" />
                <path d="M7.500 113.500 H16.500 V122.500 H7.500Z M12.500 113 V75 M17 117.500 H56" />
                <path d="M12.500 65 L16.500 75.500 H8.500Z M67 117.500 L56.500 121.500 V113.500Z" fill="#444" />
                <text x="8" y="57" fontFamily="DejaVu Sans, sans-serif" fontWeight="200" fontSize="15" fill="#c8c8c8" stroke="none">Y</text>
                <text x="74" y="123" fontFamily="DejaVu Sans, sans-serif" fontWeight="200" fontSize="15" fill="#c8c8c8" stroke="none">X</text>
              </Drawing>
            </Canvas>
            <SheetBar>
              {navShapes.map(([label, d]) => (
                <SheetNav key={label} aria-label={label}>
                  <NavGlyph viewBox="0 0 8 8" fill="#777" stroke="#777"><path d={d} /></NavGlyph>
                </SheetNav>
              ))}
              <SheetTab $active>模型</SheetTab>
              <SheetTab>布局1</SheetTab>
              <Slash />
              <SheetTab>布局2</SheetTab>
              <Slash />
              <ScrollTrack>
                <SplitGrip />
                <ScrollArrow aria-label="向左滚动" />
              </ScrollTrack>
            </SheetBar>
            <FrameBottom />
          </Frame>
          <SideBar $width={22} $inset={2}>
            <SideGroup>
              <SideGrip />
              <SideTools $height={277}><Tools names={modifyTools} /></SideTools>
            </SideGroup>
            <SideGroup>
              <SideGrip />
              <SideTools $height={65}><Tools names={orderTools} /></SideTools>
            </SideGroup>
          </SideBar>
          <EdgeStrip />
        </Workspace>

        <CommandPane>
          <CommandGrip />
          <CommandLines>
            <CommandHistory>命令:</CommandHistory>
            <CommandEntry>命令:<CommandInput /></CommandEntry>
          </CommandLines>
        </CommandPane>
        <StatusBar>
          <span>定义新的表格样式:</span>
          <StatusCode>TABLESTYLE</StatusCode>
        </StatusBar>
        <DeskStrip />

        <Ears viewBox="0 0 32 15" fill="#b4b4b4">
          <ellipse cx="7" cy="9" rx="6" ry="9" />
          <ellipse cx="23" cy="10" rx="6" ry="9" />
        </Ears>
        <Watermark aria-hidden="true">
          <WatermarkTop>Ba</WatermarkTop>
          <WatermarkSub>jing</WatermarkSub>
        </Watermark>
        <Brand>
          <Deer viewBox="0 0 132 180" fill="#d0d0d0">
            <path d="M8 27 L24 34 L33 24 L38 38 L55 48 L43 54 L47 76 Q60 93 87 95 Q111 99 113 119 Q118 140 114 153 L117 174 H108 L103 145 L93 130 Q70 133 50 125 L41 143 L35 174 H22 L27 136 Q4 118 1 93 Q2 72 20 58 L18 43Z" />
            <path d="M36 30 Q45 18 54 23 Q82 35 104 22 Q116 12 127 10 M40 22 L34 8 M52 23 L45 5 M58 24 L56 3 M64 27 L74 4 M70 19 L90 8 M84 30 Q98 31 106 14 M92 27 Q102 40 118 17 M72 31 Q83 42 96 33" fill="none" stroke="#d0d0d0" strokeWidth="4" />
          </Deer>
          <div>
            <BrandName><BrandPrefix>3D</BrandPrefix><span>溜溜网</span></BrandName>
            <BrandUrl>3D66.COM</BrandUrl>
          </div>
        </Brand>
      </Shell>
    </>
  );
}
